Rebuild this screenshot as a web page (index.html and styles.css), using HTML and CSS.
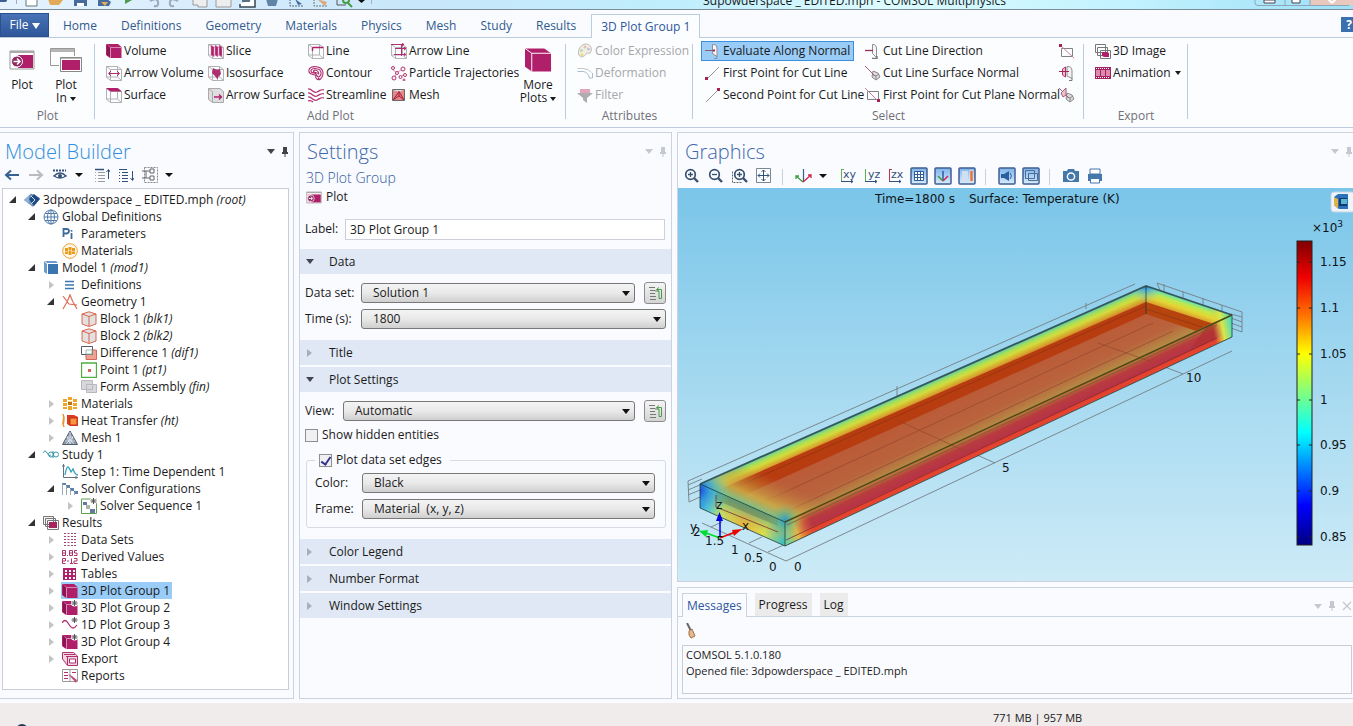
FILE: index.html
```html
<!DOCTYPE html>
<html lang="en">
<head>
<meta charset="utf-8">
<title>3dpowderspace _ EDITED.mph - COMSOL Multiphysics</title>
<link rel="stylesheet" href="styles.css">
</head>
<body>
<svg class="sprite" aria-hidden="true">
  <defs>
    <linearGradient id="jet" x1="0" y1="0" x2="0" y2="1">
      <stop offset="0" stop-color="#800000"/><stop offset=".12" stop-color="#f00000"/><stop offset=".25" stop-color="#ff7800"/>
      <stop offset=".37" stop-color="#ffff00"/><stop offset=".5" stop-color="#80ff80"/><stop offset=".63" stop-color="#00ffff"/>
      <stop offset=".75" stop-color="#0080ff"/><stop offset=".87" stop-color="#0000ff"/><stop offset="1" stop-color="#000080"/>
    </linearGradient>
  </defs>
  <symbol id="cube" viewBox="0 0 16 16"><path d="M0 1H12L15.500 4V15H4L0 12Z" fill="#b0206a"/><path d="M.5 1.500 4.500 4.500V15M4.500 4.500H15.500" fill="none" stroke="#d98ab2"/><path d="M1 1.500 4 4.500V14L1 12Z" fill="#861750"/></symbol>
  <symbol id="wire" viewBox="0 0 16 16"><path d="M.5 1.500H11.500L15.500 4.500V15.500H4.500L.5 12.500ZM4.500 15.500V4.500H15.500M4.500 4.500.5 1.500M11.500 1.500V12M.5 12H11.500L15.500 15.500" fill="none" stroke="#b2b2b6"/></symbol>
  <symbol id="arrow-volume" viewBox="0 0 16 16"><use href="#wire"/><path d="M3 8.500H13M5 6 2.500 8.500 5 11M11 6 13.500 8.500 11 11" fill="none" stroke="#b0306f"/></symbol>
  <symbol id="surface" viewBox="0 0 16 16"><use href="#wire"/><path d="M0 1H11.500L16 4.500H4.500Z" fill="#b0206a"/></symbol>
  <symbol id="slice" viewBox="0 0 16 16"><use href="#wire"/><path d="M3 2 6 4V14L3 12ZM7 2 10 4V14L7 12ZM11 2 14 4V14L11 12Z" fill="#b0206a" stroke="#d592b5" stroke-width=".5"/></symbol>
  <symbol id="iso" viewBox="0 0 16 16"><use href="#wire"/><path d="M5 3 9 5 12 4 13 9 10 12 10 15 7 11 4 8Z" fill="#b0306f"/></symbol>
  <symbol id="arrow-surface" viewBox="0 0 16 16"><path d="M.5 1.500H12L15.500 4.500V15.500H4.500L.5 12.500Z" fill="#dedde0" stroke="#aaa"/><path d="M.5 1.500 4.500 4.500V15" fill="none" stroke="#aaa"/><path d="M6 10H13M11 7.500 13.500 10 11 12.500" fill="none" stroke="#b0206a" stroke-width="1.300"/></symbol>
  <symbol id="line" viewBox="0 0 16 16"><use href="#wire"/><path d="M4.500 4.500H15.500M4.500 4.500V8" fill="none" stroke="#b0206a" stroke-width="1.400"/></symbol>
  <symbol id="contour" viewBox="0 0 16 16"><path d="M1 7C0 2 5 1 10 2S16 8 14 12 9 15 8 13 9 11 7 10 2 10 1 7ZM3 6C3 3 7 3.500 10 4S14 9 12 11 9 11 8 9 3 9 3 6ZM5.500 6C6 5 9 5 10 6.500S11 10 10 8.500 5 8 5.500 6ZM10 13 12 15" fill="none" stroke="#b0306f" stroke-width="1.100"/></symbol>
  <symbol id="stream" viewBox="0 0 16 16"><path d="M0 2C4 1 5 7 9 5S13 2 16 3M0 6C4 5 5 11 9 9S13 6 16 7M0 10C4 9 5 15 9 13S13 10 16 11M0 14C2 13 4 14 5 15" fill="none" stroke="#b0306f" stroke-width="1.200"/></symbol>
  <symbol id="arrow-line" viewBox="0 0 16 16"><use href="#wire"/><path d="M0 1.500H13M4 5.500H15M3 11.500H15M11 0 13 1.500 11 3M13 4 15 5.500 13 7M13 10 15 11.500 13 13M10.500 2V13" fill="none" stroke="#b0306f"/></symbol>
  <symbol id="particles" viewBox="0 0 16 16"><g fill="#fff" stroke="#b0306f"><circle cx="2" cy="3" r="1.500"/><circle cx="12" cy="4" r="2"/><circle cx="6" cy="8" r="1.500"/><circle cx="3" cy="13" r="2"/><circle cx="9.500" cy="12" r="1.500"/><circle cx="14" cy="10" r="1.500"/><circle cx="13" cy="15" r="1"/></g><path d="M2 5 5 7M7 7 10 5M4 11 5 9M11 11 12 10" stroke="#d88bb0"/></symbol>
  <symbol id="mesh-plot" viewBox="0 0 16 16"><path d="M1.500 2.500H13.500V13.500H1.500Z" fill="#e9858a" stroke="#696969"/><path d="M2 3H13L8 5Z" fill="#d5e2de"/><path d="M2 13 8 4.500 13 13 8 9ZM8 4.500V9" fill="#f06c78" stroke="#9b2740"/></symbol>
  <symbol id="palette" viewBox="0 0 16 16"><path d="M2 12C0 7 4 1 9 1S16 7 13 10C11 11 10 9 9 11S4 16 2 12Z" fill="#f2efdf" stroke="#bbb"/><circle cx="8" cy="4" r="1.500" fill="#e8b8cc"/><circle cx="4.500" cy="7.500" r="1.500" fill="#b9d9b9"/><circle cx="11.500" cy="6" r="1.500" fill="#b9c7e6"/><circle cx="5" cy="12" r="1.500" fill="#ead97f"/></symbol>
  <symbol id="deform" viewBox="0 0 16 16"><path d="M.5 3.500H6Q12 4 14.500 7.500" fill="none" stroke="#c5c5ca"/><path d="M.5 6.500H6Q11 7 12.500 13H15.500V8" fill="none" stroke="#a9bdd2"/></symbol>
  <symbol id="filter" viewBox="0 0 16 16"><path d="M3 2H13V6H3Z" fill="#e3a5bb"/><path d="M0 6H16L10 11V16L6 13V11Z" fill="#aeacae"/></symbol>
  <symbol id="eval" viewBox="0 0 16 16"><path d="M7.500 1.500Q12 1 12 6V13.500L7.500 10.500Z" fill="#fbf6f6" stroke="#8e8e92"/><path d="M12 13V15.500H9" fill="none" stroke="#8e8e92"/><path d="M0 7.500H8" stroke="#8b6070"/><path d="M8 6.500H10V8.500H8Z" fill="#a42354"/></symbol>
  <symbol id="direction" viewBox="0 0 16 16"><path d="M7.500 1.500Q11.500 1 11.500 6V14.500L7.500 10.500Z" fill="#fbf6f6" stroke="#8e8e92"/><path d="M12 13V15.500H7" fill="none" stroke="#77777b" stroke-width="1.400"/><path d="M0 7.500H8" stroke="#9b3355" stroke-width="1.300"/></symbol>
  <symbol id="first-pt" viewBox="0 0 16 16"><path d="M1 15 14 2" stroke="#98989b"/><path d="M0 12H3V15H0Z" fill="#a42354"/></symbol>
  <symbol id="second-pt" viewBox="0 0 16 16"><path d="M1 15 14 2" stroke="#98989b"/><path d="M12 1H15V4H12Z" fill="#a42354"/></symbol>
  <symbol id="normal" viewBox="0 0 16 16"><path d="M8 6 13 8 15 12 11 15 7 12Z" fill="#ddd" stroke="#88888b"/><path d="M8 10 11 11 14 9M11 11V15" fill="none" stroke="#88888b"/><path d="M0 1 10 11" stroke="#a95b7b"/></symbol>
  <symbol id="surf-normal" viewBox="0 0 16 16"><use href="#normal"/><path d="M2 6 7 1V8L4 10Z" fill="#edc2d0" stroke="#a25a78"/></symbol>
  <symbol id="plane-first" viewBox="0 0 16 16"><path d="M2.500 4.500H13.500V12.500H2.500Z" fill="none" stroke="#828286"/><path d="M0 1 12 13" stroke="#c8809b"/><path d="M12 12H15V15H12Z" fill="#a42354"/></symbol>
  <symbol id="plane-second" viewBox="0 0 16 16"><path d="M2.500 5.500H13.500V13.500H2.500Z" fill="none" stroke="#828286"/><path d="M1 2 15 15" stroke="#c8809b"/><path d="M0 1H3V4H0Z" fill="#a42354"/></symbol>
  <symbol id="plane-normal" viewBox="0 0 16 16"><path d="M8 1.500Q13 1 13 6V13.500L8 11Z" fill="#f4f0f2" stroke="#8e8e92"/><path d="M13 13V15.500H10" fill="none" stroke="#77777b"/><path d="M3.500 4 6.500 2V12L3.500 10Z" fill="#edc2d0" stroke="#b0306f"/><path d="M0 6.500H10" stroke="#a42354"/></symbol>
  <symbol id="image3d" viewBox="0 0 16 16"><path d="M.5 1.500H10.500V9.500H.5ZM2.500 4.500H12.500V12.500H2.500ZM5.500 7.500H15.500V15.500H5.500Z" fill="#fff" stroke="#777"/><path d="M7 9H12L14 10V14H9L7 13Z" fill="#b0206a"/></symbol>
  <symbol id="film" viewBox="0 0 16 16"><path d="M0 2H16V14H0Z" fill="#a32362"/><path d="M1 5H5V11H1ZM6 5H10V11H6ZM11 5H15V11H11Z" fill="#dd8aac"/><path d="M1 3.500H15M1 12.500H15" stroke="#fff" stroke-dasharray="1 1"/></symbol>
  <symbol id="plot" viewBox="0 0 26 20"><path d="M1 1H25V19H1Z" fill="#fff" stroke="#999"/><path d="M1 1H25V3H1Z" fill="#aaa"/><path d="M2 5H24V18H2Z" fill="#b0206a"/><path d="M2 5H9V18H2Z" fill="#fff"/><circle cx="8" cy="11.500" r="5.500" fill="#8f2a60" stroke="#fff" stroke-width="1"/><path d="M4.500 11.500H10M8 8.500 11 11.500 8 14.500" fill="none" stroke="#fff" stroke-width="1.500"/></symbol>
  <symbol id="plot-in" viewBox="0 0 34 26"><path d="M10 18.500H1.500V1.500H25.500V9" fill="#fff" stroke="#999"/><path d="M2 2H25V5H2Z" fill="#b5b5b5"/><path d="M11.500 10.500H32.500V24.500H11.500Z" fill="#fff" stroke="#888"/><path d="M12 11H32V12H12Z" fill="#bbb"/><path d="M13 13H31V23H13Z" fill="#b0206a"/></symbol>
  <symbol id="more" viewBox="0 0 28 26"><path d="M0 1H20L27 6V25H7L0 20Z" fill="#b0206a"/><path d="M0 1 7 6V25M7 6H27" fill="none" stroke="#fff"/></symbol>

  <symbol id="root" viewBox="0 0 16 16"><path d="M0 8 7 1.500 16 6 9 15Z" fill="#7394bd"/><path d="M0 8 5 3.500V12Z" fill="#8fb0d8"/><path d="M5 7 10 2 16 7 10 14Z" fill="#1f4a80"/><path d="M7 4 11 8 7 12" fill="none" stroke="#d5e2f1"/></symbol>
  <symbol id="globe" viewBox="0 0 16 16"><g fill="none" stroke="#527daa"><circle cx="8" cy="8" r="7"/><ellipse cx="8" cy="8" rx="3.500" ry="7"/><path d="M8 1V15M1 8H15M2 4.500H14M2 11.500H14"/></g></symbol>
  <symbol id="pi" viewBox="0 0 16 16"><path d="M1.500 11V3H4.500Q7 3 7 5T4.500 7.500H2M9.500 7V13" fill="none" stroke="#3e6a9d" stroke-width="1.800"/><path d="M8.700 4H10.400V5.600H8.700Z" fill="#3e6a9d"/></symbol>
  <symbol id="mats" viewBox="0 0 16 16"><path d="M1 3H5V6H1ZM6 1H10V4H6ZM11 3H15V6H11ZM1 7H5V10H1ZM6 5.500H10V9H6ZM11 7H15V10H11ZM1 11H5V13H1ZM6 10H10V14H6ZM11 11H15V13H11Z" fill="#eda62b"/><path d="M6 6H10V9H6Z" fill="#c3740c"/></symbol>
  <symbol id="mats-ring" viewBox="0 0 16 16"><circle cx="8" cy="8" r="7.300" fill="#fff8e9" stroke="#e8a33a"/><path d="M3 5H6V8H3ZM6.500 4H9.500V7.500H6.500ZM10 5H13V8H10ZM3 8.500H6V11H3ZM6.500 8H9.500V12H6.500ZM10 8.500H13V11H10Z" fill="#e89c1c"/></symbol>
  <symbol id="model" viewBox="0 0 16 16"><path d="M1 1 4 4V14L1 12ZM2 1H13L15 3H4Z" fill="#6b9bc9"/><path d="M5 4H15V14H5Z" fill="#3b75b0"/></symbol>
  <symbol id="defs" viewBox="0 0 16 16"><path d="M3 4.500H12M3 8H12M3 11.500H12" stroke="#3e76b3" stroke-width="1.600"/></symbol>
  <symbol id="geom" viewBox="0 0 16 16"><path d="M8 1 5 8 1 15M8 1 11 8 15 15M1 2 7 10 15 11M8 0V3" fill="none" stroke="#de6c58" stroke-width="1.200"/></symbol>
  <symbol id="block" viewBox="0 0 16 16"><path d="M1 3 8 .8 15 3V13L8 15.500 1 13Z" fill="#e3e0e0" stroke="#d86650"/><path d="M1 3 8 5.500 15 3M8 5.500V15" fill="none" stroke="#d86650"/></symbol>
  <symbol id="diff" viewBox="0 0 16 16"><path d="M5 5H15.500V14.500H5Z" fill="#efa292" stroke="#d7695a"/><path d="M.5 1.500H11.500V9.500H.5Z" fill="#fff" stroke="#555b66"/><path d="M5 5H11V9H5Z" fill="#fff" stroke="#9dbbb5"/></symbol>
  <symbol id="point" viewBox="0 0 16 16"><path d="M.5 1H15.500V15.500H.5Z" fill="#fff" stroke="#4fae40" stroke-width="1.300"/><path d="M7 7H10V10H7Z" fill="#d1685c"/></symbol>
  <symbol id="form" viewBox="0 0 16 16"><path d="M.5 1.500H11.500V10.500H.5ZM5.500 5.500H15.500V13.500H5.500Z" fill="#d8d8dc" stroke="#b8b8bd"/></symbol>
  <symbol id="heat" viewBox="0 0 16 16"><path d="M1 1Q3 4 2 8T2 14Q0 11 1 8T1 1" fill="#f0aa30" stroke="#e4932b"/><path d="M5 2H12L16 4V13H8L5 11Z" fill="#d83b20"/><path d="M8 5H15V12H8Z" fill="#f7943c" stroke="#c9321f"/></symbol>
  <symbol id="mesh" viewBox="0 0 16 16"><path d="M8 1 15.500 14.500H.5Z" fill="#8b9bac" stroke="#52606e"/><path d="M5 7H11L8 14ZM3 11H13M5 7 8 10 11 7M8 2V10M4 14 8 10 12 14" fill="none" stroke="#dfe5eb" stroke-width=".8"/></symbol>
  <symbol id="study" viewBox="0 0 16 16"><path d="M0 6Q2 2 4 6T8 8" fill="none" stroke="#3996ad"/><circle cx="8" cy="7.500" r="2.500" fill="none" stroke="#3996ad"/><circle cx="13" cy="7.500" r="2.500" fill="none" stroke="#3996ad"/><path d="M10 4V11" stroke="#3996ad"/></symbol>
  <symbol id="step" viewBox="0 0 16 16"><path d="M1.500 0V13.500H16M0 2H3M14 12V15" fill="none" stroke="#637281"/><path d="M3 11Q5 0 7 4T9 8 11 5Q13 11 16 11" fill="none" stroke="#2f9fc0" stroke-width="1.300"/></symbol>
  <symbol id="solver" viewBox="0 0 16 16"><path d="M0 2H4V4H0ZM4 4H8V7H4ZM8 7H12V10H8ZM12 10H16V13H12Z" fill="#5b83ad"/><path d="M.5 3V14M4.500 5V14M8.500 8V14M12.500 11V14" stroke="#9aa7b4"/></symbol>
  <symbol id="star" viewBox="0 0 16 16"><circle cx="12.500" cy="3" r="3.500" fill="#fff"/><path d="M12.500 0V6M9.500 3H15.500M10.500 1 14.500 5M14.500 1 10.500 5" stroke="#555"/></symbol>
  <symbol id="sequence" viewBox="0 0 16 16"><path d="M.5 1H15.500V15.500H.5Z" fill="#fff" stroke="#5f9e55"/><path d="M2 4H6V7H2ZM9 11H14V15H9Z" fill="#617c9b"/><path d="M5 7H9V11H5Z" fill="#a7b5a9"/><use href="#star"/></symbol>
  <symbol id="results" viewBox="0 0 16 16"><path d="M.5 1.500H10.500V9.500H.5ZM2.500 3.500H12.500V11.500H2.500ZM4.500 5.500H15.500V14.500H4.500Z" fill="#f6f6f6" stroke="#777"/><path d="M6 7H14V13H6Z" fill="#a8245d"/></symbol>
  <symbol id="datasets" viewBox="0 0 16 16"><path d="M3 1V15M6.500 1V15M10 1V15M13 1V15" stroke="#a24676" stroke-width="2" stroke-dasharray="1 2"/></symbol>
  <symbol id="derived" viewBox="0 0 16 16"><g fill="none" stroke="#b0306f"><path d="M.5 1.500H3.500V6.500H.5ZM.5 4H3.500M7.500 1.500H10.500V6.500H7.500ZM7.500 4H10.500M15 1.500H12.500V4H15V6.500H12M5.500 6V7M3.500 14.500H.5V9.500H3.500V12H.5M5 12H7M9.500 9.500V14.500M8 14.500H11M12 9.500H15V12H12V14.500H15.500"/></g></symbol>
  <symbol id="tables" viewBox="0 0 16 16"><path d="M1 2H14V14H1Z" fill="#b0206a"/><path d="M3 4H5V6H3ZM7 4H9V6H7ZM11 4H13V6H11ZM3 7H5V9H3ZM7 7H9V9H7ZM11 7H13V9H11ZM3 11H5V13H3ZM7 11H9V13H7ZM11 11H13V13H11Z" fill="#fff"/></symbol>
  <symbol id="cube-star" viewBox="0 0 16 16"><use href="#cube"/><use href="#star"/></symbol>
  <symbol id="plot1d" viewBox="0 0 16 16"><path d="M0 6Q3 1 6 6T11 11 15 8" fill="none" stroke="#b0306f" stroke-width="1.300"/><use href="#star"/></symbol>
  <symbol id="export" viewBox="0 0 16 16"><path d="M.5 1.500H11.500L15.500 5V14.500H5.500L.5 8Z" fill="#f3d5e2" stroke="#b0306f"/><path d="M2 3.500H13M4 5.500H15M5.500 6V14" fill="none" stroke="#b0306f"/><path d="M7.500 8H13.500V12H7.500Z" fill="#fff" stroke="#b0306f"/></symbol>
  <symbol id="reports" viewBox="0 0 16 16"><path d="M.5 1.500H15.500V13.500H.5ZM8 2V13" fill="#fff" stroke="#999"/><path d="M2 4.500H6M2 7.500H6M2 10.500H6M10 4.500H14" stroke="#b0306f"/><path d="M6 6 14 15 15 12 10 8Z" fill="#c54a85"/></symbol>

  <symbol id="pin" viewBox="0 0 8 12"><path d="M2 1H6V6H7V8H1V6H2ZM3.500 8H4.500V11H3.500Z" fill="currentColor"/></symbol>
  <symbol id="expand" viewBox="0 0 16 16"><path d="M1 2.500H10" stroke="#31517b" stroke-width="1.500"/><path d="M4 5.500H11M4 8.500H11M4 11.500H11M4 14.500H11" stroke="#999"/><path d="M1.500 5V15" stroke="#aaa" stroke-dasharray="1 2"/><path d="M14.500 12V3M12.500 5 14.500 2.500 16 5" fill="none" stroke="#31517b"/></symbol>
  <symbol id="collapse" viewBox="0 0 16 16"><path d="M1 2.500H9M4 5.500H10M4 8.500H10M4 11.500H10M4 14.500H10" stroke="#31517b"/><path d="M1.500 5V15" stroke="#31517b" stroke-dasharray="1 2"/><path d="M14.500 4V13M12.500 11 14.500 13.500 16 11" fill="none" stroke="#31517b"/></symbol>
  <symbol id="goto" viewBox="0 0 16 16"><path d="M2 2.500H8M3 5.500H8M3 8.500H8M3 11.500H9M3 14.500H9" stroke="#777"/><path d="M8 6H12V13.500H14.500V4.500H10M12 2.500 9.500 4.500 12 6.500" fill="none" stroke="#4d9a4d"/></symbol>
  <symbol id="lens" viewBox="0 0 16 16"><circle cx="6.500" cy="6.500" r="4.800" fill="none" stroke="#36506e" stroke-width="1.700"/><path d="M10 10 14 14" stroke="#36506e" stroke-width="2.400"/></symbol>
</svg>

<header class="titlebar">
  <div class="quick" aria-hidden="true">
    <svg viewBox="0 0 372 10" width="372" height="10">
      <path d="M0 0H8L6 3H0Z" fill="#395f93"/><path d="M16.500 0V5" stroke="#aab"/><path d="M26 0V7H37V0" fill="#fff" stroke="#677"/>
      <path d="M48 0 50 6H59L63 1H53Z" fill="#e2aa58"/><path d="M74 0V7H87V0Z" fill="#466c9b"/><path d="M77 4H84V7H77Z" fill="#fff"/>
      <path d="M98 0V7H109L111 3 107 0Z" fill="#466c9b"/><path d="M101 3H108L105 7Z" fill="#e4ad60"/>
      <path d="M125 0H134L125 5Z" fill="#4c9e4e"/><path d="M150 2Q157-2 158 3T154 7M178 2Q171-2 170 3T174 7" fill="none" stroke="#9ab" stroke-width="2"/>
      <path d="M193 0V6H198V8H207V0M216 0V8H231V0" fill="#eee" stroke="#999"/><path d="M240 5V8H255V0M242 2H250" fill="#fff" stroke="#345" stroke-width="1.500"/>
      <path d="M266 0 268 7H276L278 0Z" fill="#6084a8"/><path d="M290 0V7H303" fill="none" stroke="#567" stroke-dasharray="2 1"/><path d="M295 0 302 5 298 6Z" fill="#456c99"/>
      <path d="M314 0V7H327" fill="none" stroke="#777" stroke-dasharray="2 1"/><path d="M317 0 325 7 327 3Z" fill="#dca67e"/>
      <path d="M337 0V6H346" fill="none" stroke="#555"/><circle cx="346" cy="1" r="3" fill="none" stroke="#469b46" stroke-width="2"/><path d="M348 4 352 8" stroke="#469b46" stroke-width="2"/><path d="M358 1H365L361.500 4Z" fill="#111"/><path d="M371.500 0V5" stroke="#aab"/>
    </svg>
  </div>
  <span class="caption">3dpowderspace _ EDITED.mph - COMSOL Multiphysics</span>
  <svg class="winbtns" viewBox="0 0 99 10" width="99" height="10" aria-hidden="true"><path d="M56 0H99V6H56Z" fill="#e9c8bd"/><path d="M1 0V4Q1 6.500 4 6.500H95M31 0V6M56 0V6" fill="none" stroke="#8ea5b5"/><path d="M10 1H21V4H10ZM38 0V4H46V0" fill="#fff" stroke="#445"/><path d="M74 0 78 4M82 0 78 4" stroke="#fff" stroke-width="2"/></svg>
</header>

<nav class="tabs">
  <button class="file">File <i class="tri"></i></button>
  <button>Home</button><button>Definitions</button><button>Geometry</button><button>Materials</button><button>Physics</button><button>Mesh</button><button>Study</button><button>Results</button>
  <button class="active">3D Plot Group 1</button>
  <button class="help" aria-label="Help">?</button>
</nav>

<section class="ribbon">
  <div class="group g-plot">
    <div class="big-row">
      <button class="big"><svg class="i-plot"><use href="#plot"/></svg><span>Plot</span></button>
      <button class="big"><svg class="i-in"><use href="#plot-in"/></svg><span>Plot</span><span>In <i class="tri"></i></span></button>
    </div>
    <h3>Plot</h3>
  </div>
  <div class="group g-add">
    <div class="cols">
      <div class="col"><button><svg><use href="#cube"/></svg>Volume</button><button><svg><use href="#arrow-volume"/></svg>Arrow Volume</button><button><svg><use href="#surface"/></svg>Surface</button></div>
      <div class="col"><button><svg><use href="#slice"/></svg>Slice</button><button><svg><use href="#iso"/></svg>Isosurface</button><button><svg><use href="#arrow-surface"/></svg>Arrow Surface</button></div>
      <div class="col"><button><svg><use href="#line"/></svg>Line</button><button><svg><use href="#contour"/></svg>Contour</button><button><svg><use href="#stream"/></svg>Streamline</button></div>
      <div class="col"><button><svg><use href="#arrow-line"/></svg>Arrow Line</button><button><svg><use href="#particles"/></svg>Particle Trajectories</button><button><svg><use href="#mesh-plot"/></svg>Mesh</button></div>
      <button class="big"><svg class="i-more"><use href="#more"/></svg><span>More</span><span>Plots <i class="tri"></i></span></button>
    </div>
    <h3>Add Plot</h3>
  </div>
  <div class="group g-attr">
    <div class="cols">
      <div class="col"><button disabled><svg><use href="#palette"/></svg>Color Expression</button><button disabled><svg><use href="#deform"/></svg>Deformation</button><button disabled><svg><use href="#filter"/></svg>Filter</button></div>
    </div>
    <h3>Attributes</h3>
  </div>
  <div class="group g-select">
    <div class="cols">
      <div class="col"><button class="on"><svg><use href="#eval"/></svg>Evaluate Along Normal</button><button><svg><use href="#first-pt"/></svg>First Point for Cut Line</button><button><svg><use href="#second-pt"/></svg>Second Point for Cut Line</button></div>
      <div class="col"><button><svg><use href="#direction"/></svg>Cut Line Direction</button><button><svg><use href="#normal"/></svg>Cut Line Surface Normal</button><button><svg><use href="#plane-first"/></svg>First Point for Cut Plane Normal</button></div>
      <div class="col"><button aria-label="Second point for cut plane normal"><svg><use href="#plane-second"/></svg></button><button aria-label="Cut plane normal"><svg><use href="#plane-normal"/></svg></button><button aria-label="Cut plane surface normal"><svg><use href="#surf-normal"/></svg></button></div>
    </div>
    <h3>Select</h3>
  </div>
  <div class="group g-export">
    <div class="cols">
      <div class="col"><button><svg><use href="#image3d"/></svg>3D Image</button><button><svg><use href="#film"/></svg>Animation <i class="tri"></i></button></div>
    </div>
    <h3>Export</h3>
  </div>
</section>

<main class="desk">
  <section class="panel builder">
    <header class="head"><h2>Model Builder</h2><i class="tri"></i><svg class="pin"><use href="#pin"/></svg></header>
    <div class="bar">
      <svg viewBox="0 0 176 18" width="176" height="18" aria-hidden="true">
        <path d="M4 9H17M9 4.500 4 9 9 13.500" fill="none" stroke="#356293" stroke-width="2"/><path d="M27 9H40M35 4.500 40 9 35 13.500" fill="none" stroke="#bbb" stroke-width="2"/>
        <path d="M51 4.500H64" stroke="#35517b" stroke-width="2" stroke-dasharray="2 1"/><path d="M52 10Q58 4 64 10Q58 14 52 10Z" fill="#fff" stroke="#35517b" stroke-width="1.500"/><circle cx="58" cy="10" r="2" fill="#35517b"/>
        <path d="M73 7H81L77 11Z" fill="#111"/><use href="#expand" x="92" y="1" width="16" height="16"/><use href="#collapse" x="116" y="1" width="16" height="16"/>
        <path d="M142.500 1.500H155.500V16.500H142.500Z" fill="none" stroke="#888" stroke-dasharray="2 1"/><path d="M140 5H148M140 12H148M144 5V12M148 3H152V7H148ZM148 10H152V14H148Z" fill="none" stroke="#666"/><path d="M163 7H171L167 11Z" fill="#111"/>
      </svg>
    </div>
    <div class="treebox">
      <ul class="tree">
        <li><div class="row"><i class="open"></i><span class="node"><svg><use href="#root"/></svg>3dpowderspace _ EDITED.mph <em>(root)</em></span></div>
        <ul>
          <li><div class="row"><i class="open"></i><span class="node"><svg><use href="#globe"/></svg>Global Definitions</span></div>
            <ul>
              <li><div class="row"><i></i><span class="node"><svg><use href="#pi"/></svg>Parameters</span></div></li>
              <li><div class="row"><i></i><span class="node"><svg><use href="#mats-ring"/></svg>Materials</span></div></li>
            </ul></li>
          <li><div class="row"><i class="open"></i><span class="node"><svg><use href="#model"/></svg>Model 1 <em>(mod1)</em></span></div>
            <ul>
              <li><div class="row"><i class="shut"></i><span class="node"><svg><use href="#defs"/></svg>Definitions</span></div></li>
              <li><div class="row"><i class="open"></i><span class="node"><svg><use href="#geom"/></svg>Geometry 1</span></div>
                <ul>
                  <li><div class="row"><i></i><span class="node"><svg><use href="#block"/></svg>Block 1 <em>(blk1)</em></span></div></li>
                  <li><div class="row"><i></i><span class="node"><svg><use href="#block"/></svg>Block 2 <em>(blk2)</em></span></div></li>
                  <li><div class="row"><i></i><span class="node"><svg><use href="#diff"/></svg>Difference 1 <em>(dif1)</em></span></div></li>
                  <li><div class="row"><i></i><span class="node"><svg><use href="#point"/></svg>Point 1 <em>(pt1)</em></span></div></li>
                  <li><div class="row"><i></i><span class="node"><svg><use href="#form"/></svg>Form Assembly <em>(fin)</em></span></div></li>
                </ul></li>
              <li><div class="row"><i class="shut"></i><span class="node"><svg><use href="#mats"/></svg>Materials</span></div></li>
              <li><div class="row"><i class="shut"></i><span class="node"><svg><use href="#heat"/></svg>Heat Transfer <em>(ht)</em></span></div></li>
              <li><div class="row"><i class="shut"></i><span class="node"><svg><use href="#mesh"/></svg>Mesh 1</span></div></li>
            </ul></li>
          <li><div class="row"><i class="open"></i><span class="node"><svg><use href="#study"/></svg>Study 1</span></div>
            <ul>
              <li><div class="row"><i></i><span class="node"><svg><use href="#step"/></svg>Step 1: Time Dependent 1</span></div></li>
              <li><div class="row"><i class="open"></i><span class="node"><svg><use href="#solver"/></svg>Solver Configurations</span></div>
                <ul><li><div class="row"><i class="shut"></i><span class="node"><svg><use href="#sequence"/></svg>Solver Sequence 1</span></div></li></ul></li>
            </ul></li>
          <li><div class="row"><i class="open"></i><span class="node"><svg><use href="#results"/></svg>Results</span></div>
            <ul>
              <li><div class="row"><i class="shut"></i><span class="node"><svg><use href="#datasets"/></svg>Data Sets</span></div></li>
              <li><div class="row"><i class="shut"></i><span class="node"><svg><use href="#derived"/></svg>Derived Values</span></div></li>
              <li><div class="row"><i class="shut"></i><span class="node"><svg><use href="#tables"/></svg>Tables</span></div></li>
              <li><div class="row"><i class="shut"></i><span class="node sel"><svg><use href="#cube"/></svg>3D Plot Group 1</span></div></li>
              <li><div class="row"><i class="shut"></i><span class="node"><svg><use href="#cube-star"/></svg>3D Plot Group 2</span></div></li>
              <li><div class="row"><i class="shut"></i><span class="node"><svg><use href="#plot1d"/></svg>1D Plot Group 3</span></div></li>
              <li><div class="row"><i class="shut"></i><span class="node"><svg><use href="#cube-star"/></svg>3D Plot Group 4</span></div></li>
              <li><div class="row"><i class="shut"></i><span class="node"><svg><use href="#export"/></svg>Export</span></div></li>
              <li><div class="row"><i></i><span class="node"><svg><use href="#reports"/></svg>Reports</span></div></li>
            </ul></li>
        </ul></li>
      </ul>
    </div>
  </section>

  <section class="panel settings">
    <header class="head dim"><h2>Settings</h2><i class="tri"></i><svg class="pin"><use href="#pin"/></svg></header>
    <p class="sub">3D Plot Group</p>
    <button class="do-plot"><svg><use href="#plot"/></svg>Plot</button>
    <div class="field label-row"><label for="lbl">Label:</label><input id="lbl" type="text" value="3D Plot Group 1"></div>
    <h4 class="sec"><i class="down"></i>Data</h4>
    <div class="body">
      <div class="field f-wide"><label for="ds">Data set:</label><span class="sel-wrap"><select id="ds"><option>Solution 1</option></select></span><button class="go" aria-label="Go to source"><svg><use href="#goto"/></svg></button></div>
      <div class="field f-wide"><label for="tm">Time (s):</label><span class="sel-wrap"><select id="tm"><option>1800</option></select></span></div>
    </div>
    <h4 class="sec"><i class="right"></i>Title</h4>
    <h4 class="sec"><i class="down"></i>Plot Settings</h4>
    <div class="body">
      <div class="field f-view"><label for="vw">View:</label><span class="sel-wrap"><select id="vw"><option>Automatic</option></select></span><button class="go" aria-label="Go to source"><svg><use href="#goto"/></svg></button></div>
      <label class="check"><input type="checkbox">Show hidden entities</label>
      <fieldset>
        <legend><label class="check"><input type="checkbox" checked>Plot data set edges</label></legend>
        <div class="field"><label for="cl">Color:</label><span class="sel-wrap"><select id="cl"><option>Black</option></select></span></div>
        <div class="field"><label for="fr">Frame:</label><span class="sel-wrap"><select id="fr"><option>Material&nbsp; (x, y, z)</option></select></span></div>
      </fieldset>
    </div>
    <h4 class="sec"><i class="right"></i>Color Legend</h4>
    <h4 class="sec"><i class="right"></i>Number Format</h4>
    <h4 class="sec"><i class="right"></i>Window Settings</h4>
  </section>

  <div class="side">
    <section class="panel graphics">
      <header class="head dim"><h2>Graphics</h2><i class="tri"></i><svg class="pin"><use href="#pin"/></svg></header>
      <div class="bar gbar">
        <svg viewBox="684 165 424 20" width="424" height="20" role="img" aria-label="View tools">
          <defs><linearGradient id="tb" x1="0" y1="0" x2="0" y2="1"><stop offset="0" stop-color="#7fb3ec"/><stop offset="1" stop-color="#d8ecfd"/></linearGradient></defs>
          <use href="#lens" x="684" y="167" width="16" height="16"/><path d="M688 173.500H693M690.500 171V176" stroke="#36506e" stroke-width="1.300"/>
          <use href="#lens" x="708" y="167" width="16" height="16"/><path d="M712 173.500H717" stroke="#36506e" stroke-width="1.300"/>
          <path d="M732.500 170.500V181.500H742" fill="none" stroke="#666" stroke-dasharray="2 1"/><use href="#lens" x="733" y="167" width="16" height="16"/><path d="M737 173.500H742M739.500 171V176" stroke="#36506e" stroke-width="1.300"/>
          <path d="M756.500 167.500H770.500V181.500H756.500Z" fill="#fff" stroke="#7a8794"/><path d="M763.500 169V180M758 174.500H769M761.500 171 763.500 169 765.500 171M761.500 178 763.500 180 765.500 178M760 172.500 758 174.500 760 176.500M767 172.500 769 174.500 767 176.500" fill="none" stroke="#31517b"/>
          <path d="M782.500 168V184M985.500 168V184M1049.500 168V184" stroke="#c9d0da"/>
          <path d="M803.500 168V180" stroke="#31618b" stroke-width="1.200"/><path d="M803 181 796 175M796 178V175H799" fill="none" stroke="#3b9c3b" stroke-width="1.300"/><path d="M803 181 811 174M808 174H811V177" fill="none" stroke="#cf2449" stroke-width="1.300"/><path d="M819 173H827L823 177Z" fill="#111"/>
          <g fill="none"><path d="M841.500 168V180.500M865.500 168V180.500M841 168.500H844" stroke="#5fae52"/><path d="M889.500 168V180.500M889 168.500H892" stroke="#b03a58"/><path d="M841 180.500H853M865 180.500H877M889 180.500H901M851 179 853 180.500 851 182M875 179 877 180.500 875 182M899 179 901 180.500 899 182" stroke="#31517b"/></g>
          <text x="843" y="177" class="ax">xy</text><text x="868" y="177" class="ax">yz</text><text x="891" y="177" class="ax">zx</text>
          <g fill="url(#tb)" stroke="#3f5f91" stroke-width="1.500"><rect x="911" y="167" width="16" height="16" rx="1"/><rect x="935" y="167" width="16" height="16" rx="1"/><rect x="959" y="167" width="16" height="16" rx="1"/><rect x="999" y="167" width="16" height="16" rx="1"/><rect x="1023" y="167" width="16" height="16" rx="1"/></g>
          <path d="M914.500 170.500H923.500V179.500H914.500ZM917.500 170V180M920.500 170V180M914 173.500H924M914 176.500H924" fill="#fff" stroke="#315b93"/>
          <path d="M943 170V180" stroke="#1d4b8a" stroke-width="1.300"/><path d="M943 180 938 175" stroke="#3b9c3b" stroke-width="1.500"/><path d="M943 180 948 175" stroke="#cf2449" stroke-width="1.500"/>
          <path d="M962 170H968V181H962Z" fill="#cfe0f3"/><path d="M970 169.500H973V180.500H970Z" fill="#e86c34" stroke="#fff" stroke-width=".5"/>
          <path d="M1001 173H1004L1009 170V180L1004 177H1001Z" fill="#2c5f9d"/><path d="M1010 172Q1013 175 1010 178" fill="none" stroke="#2c5f9d"/>
          <path d="M1025.500 169.500H1034.500V177.500H1025.500ZM1028.500 172.500H1037.500V179.500H1028.500Z" fill="none" stroke="#4b6d96"/>
          <path d="M1063 170H1067L1068 168H1074L1075 170H1079V181H1063Z" fill="#4477aa"/><circle cx="1071" cy="175.500" r="3.600" fill="#4477aa" stroke="#fff" stroke-width="1.500"/>
          <path d="M1090 168H1100V173H1090Z" fill="#fff" stroke="#4477aa"/><path d="M1088 173H1102V180H1088Z" fill="#4477aa"/><path d="M1090.500 177.500H1099.500V182H1090.500Z" fill="#fff" stroke="#4477aa"/>
        </svg>
      </div>
      <svg class="canvas" viewBox="678 188 675 393" role="img" aria-label="Surface plot of temperature">
        <defs>
          <linearGradient id="sky" x1="0" y1="0" x2="0" y2="1"><stop offset="0" stop-color="#7ac5e9"/><stop offset=".5" stop-color="#a5d9f0"/><stop offset="1" stop-color="#cdebf7"/></linearGradient>
          <linearGradient id="wallL" gradientUnits="userSpaceOnUse" x1="980" y1="359.700" x2="986.200" y2="373.700"><stop offset="0" stop-color="#55c9b8"/><stop offset=".25" stop-color="#a5df5a"/><stop offset=".5" stop-color="#d3dc3c"/><stop offset=".8" stop-color="#d7a52e"/><stop offset="1" stop-color="#cf7b28"/></linearGradient>
          <linearGradient id="wallR" gradientUnits="userSpaceOnUse" x1="1190" y1="301" x2="1185" y2="316"><stop offset="0" stop-color="#5ee0b8"/><stop offset=".3" stop-color="#bfe94c"/><stop offset=".6" stop-color="#e4d534"/><stop offset="1" stop-color="#d9942c"/></linearGradient>
          <linearGradient id="floor" gradientUnits="userSpaceOnUse" x1="963" y1="396" x2="980" y2="432"><stop offset="0" stop-color="#bb5b38"/><stop offset=".65" stop-color="#b9633d"/><stop offset="1" stop-color="#b58a45"/></linearGradient>
          <linearGradient id="side" gradientUnits="userSpaceOnUse" x1="980" y1="431" x2="989" y2="450.300"><stop offset="0" stop-color="#b98244"/><stop offset=".35" stop-color="#b83d3d"/><stop offset=".72" stop-color="#b73248"/><stop offset=".78" stop-color="#e0402f"/><stop offset="1" stop-color="#e8452e"/></linearGradient>
          <linearGradient id="front" gradientUnits="userSpaceOnUse" x1="700" y1="495" x2="786" y2="534"><stop offset="0" stop-color="#2450e0"/><stop offset=".12" stop-color="#4cc5e2"/><stop offset=".28" stop-color="#c5df62"/><stop offset=".55" stop-color="#e8b43a"/><stop offset=".78" stop-color="#dade4c"/><stop offset="1" stop-color="#44bfc0"/></linearGradient>
          <linearGradient id="frontTop" gradientUnits="userSpaceOnUse" x1="744" y1="503" x2="736" y2="521"><stop offset="0" stop-color="#58b5a0"/><stop offset="1" stop-color="#b0b060" stop-opacity="0"/></linearGradient>
          <linearGradient id="near" gradientUnits="userSpaceOnUse" x1="742" y1="503" x2="757" y2="470"><stop offset="0" stop-color="#7bc08c"/><stop offset=".3" stop-color="#cfb648" stop-opacity=".8"/><stop offset="1" stop-color="#c27b3a" stop-opacity="0"/></linearGradient>
          <linearGradient id="nearSide" gradientUnits="userSpaceOnUse" x1="785" y1="534" x2="812" y2="522"><stop offset="0" stop-color="#72d19c"/><stop offset=".4" stop-color="#e4c446" stop-opacity=".9"/><stop offset="1" stop-color="#e5622f" stop-opacity="0"/></linearGradient>
          <linearGradient id="end" gradientUnits="userSpaceOnUse" x1="1213" y1="330" x2="1232" y2="326"><stop offset="0" stop-color="#e7c43a" stop-opacity="0"/><stop offset=".5" stop-color="#d9e748"/><stop offset="1" stop-color="#53dcb8"/></linearGradient>
          <radialGradient id="blueA" gradientUnits="userSpaceOnUse" cx="698" cy="490" r="32"><stop offset="0" stop-color="#1538e0"/><stop offset=".35" stop-color="#2c9ce8" stop-opacity=".8"/><stop offset="1" stop-color="#5fe0c0" stop-opacity="0"/></radialGradient>
          <radialGradient id="blueC" gradientUnits="userSpaceOnUse" cx="1146" cy="283" r="20"><stop offset="0" stop-color="#0b35e0"/><stop offset=".35" stop-color="#48a8df" stop-opacity=".9"/><stop offset="1" stop-color="#9fdca0" stop-opacity="0"/></radialGradient>
          <radialGradient id="blueB" gradientUnits="userSpaceOnUse" cx="785" cy="520" r="18"><stop offset="0" stop-color="#2097d2" stop-opacity=".9"/><stop offset=".5" stop-color="#5db48f" stop-opacity=".5"/><stop offset="1" stop-color="#aab060" stop-opacity="0"/></radialGradient>
          <clipPath id="body"><path d="M700 484 1146 286 1232 315V337L785 546 700 508Z"/></clipPath>
        </defs>
        <rect x="678" y="188" width="675" height="393" fill="url(#sky)"/>
        <g fill="none" stroke="#747e85" stroke-width=".9">
          <path d="M688 481 1135 284M688 481 689 502M688 485 702 479M688 490 702 484M688 495 700 490M689 502 700 497M897 386V407M1086 303V309"/>
          <path d="M1157 283 1242 312V332M1157 283 1160 290M1164 284V293M1183 291V300M1203 298V306M1222 305V312M1231 314 1242 317M1231 318 1242 322M1231 323 1242 327M1231 328 1242 332"/>
          <path d="M702 523 786 561 1232 351M768 552 786 544M749 543 762 537M730 535 743 529M711 527 722 522M995 463 977 455M1183 374 1165 367"/>
        </g>
        <g clip-path="url(#body)">
          <path d="M700 484 1146 286V306L716 500V508H700Z" fill="url(#wallL)"/>
          <path d="M700 506 1146 312 1232 314 785 524Z" fill="url(#floor)"/>
          <path d="M1146 286 1232 315V337L1217 338V325L1146 304Z" fill="url(#wallR)"/>
          <path d="M716 491 1146 302V314L716 508Z" fill="#b73c10"/>
          <path d="M716 496 1146 306" stroke="#9b350f"/>
          <path d="M1146 302 1217 325V338L1146 314Z" fill="#b6440f"/>
          <path d="M1146 309 1217 332" stroke="#953a12"/>
          <path d="M785 521 1232 314V337L785 546Z" fill="url(#side)"/>
          <path d="M1206 327 1217 322V338L1190 350Z" fill="#b03030" opacity=".7"/>
          <g stroke="#91442b" stroke-width=".8" fill="none" opacity=".8"><path d="M722 521 1153 323M745 531 1173 331M897 420 967 452M1098 343 1152 362"/></g>
          <path d="M700 484 785 522 880 478 790 440Z" fill="url(#near)"/>
          <path d="M785 522 840 496V520L785 546Z" fill="url(#nearSide)"/>
          <path d="M700 484 785 522V546L700 508Z" fill="url(#front)"/>
          <path d="M700 484 785 522V546L700 508Z" fill="url(#frontTop)"/>
          <path d="M716 492 778 519V526L716 500Z" fill="#5f7a50" opacity=".5"/>
          <path d="M1205 305 1232 315V337L1205 350Z" fill="url(#end)"/>
          <circle cx="698" cy="490" r="32" fill="url(#blueA)"/><circle cx="1146" cy="283" r="20" fill="url(#blueC)"/><circle cx="785" cy="520" r="18" fill="url(#blueB)"/>
        </g>
        <g fill="none" stroke="#1f3b35" stroke-width="1">
          <path d="M700 484 1146 286 1232 315" stroke="#35585a" stroke-width="1.800"/>
          <path d="M1232 315V337L785 546 700 508V484L785 522V546M1146 286V314" stroke-width=".8"/>
          <path d="M785 522 1232 315" stroke="#4b4a12" stroke-width="1.400"/>
          <path d="M787 525 1217 325" stroke="#786020" stroke-width=".8"/>
          <path d="M786 540 1217 338M716 495V507L778 532" stroke="#7e2c2c" stroke-width=".8"/>
        </g>
        <path d="M720 538V518" stroke="#0000e0" stroke-width="1.500"/><path d="M716 521 719.500 512 723 521Z" fill="#0000e0"/>
        <path d="M720 538 735 532" stroke="#f00000" stroke-width="1.500"/><path d="M732 530 742 529 734 536Z" fill="#f00000"/>
        <path d="M720 538 706 533" stroke="#00dc30" stroke-width="1.500"/><path d="M708 530 699 531 706 537Z" fill="#00dc30"/>
        <g class="num"><text x="716" y="509">z</text><text x="742" y="530">x</text><text x="690" y="531">y</text><text x="693" y="536">2</text><text x="705" y="545">1.5</text><text x="731" y="554">1</text><text x="744" y="562">0.5</text><text x="769" y="571">0</text><text x="794" y="571">0</text><text x="1002" y="472">5</text><text x="1186" y="382">10</text>
        <text x="875" y="203">Time=1800 s</text><text x="969" y="203">Surface: Temperature (K)</text>
        <text x="1312" y="232">×10<tspan dy="-5" class="sup">3</tspan></text>
        <text x="1320" y="266">1.15</text><text x="1320" y="312">1.1</text><text x="1320" y="358">1.05</text><text x="1320" y="404">1</text><text x="1320" y="449">0.95</text><text x="1320" y="495">0.9</text><text x="1320" y="541">0.85</text></g>
        <rect x="1297" y="241" width="15" height="304" fill="url(#jet)" stroke="#222"/>
        <path d="M1297 262H1300M1309 262H1312M1297 308H1300M1309 308H1312M1297 354H1300M1309 354H1312M1297 400H1300M1309 400H1312M1297 445H1300M1309 445H1312M1297 491H1300M1309 491H1312M1297 537H1300M1309 537H1312" stroke="#222"/>
        <rect x="1331" y="192" width="24" height="20" rx="3" fill="#eef4fb" stroke="#c3d3e2"/><path d="M1334 197 1338 194H1348V209H1339L1334 205Z" fill="#2b70b9"/><path d="M1334 197 1338 199V209L1334 205Z" fill="#e0b24a"/><path d="M1339 198H1347V206H1339Z" fill="#123a6b"/><path d="M1341 199H1347V204H1341Z" fill="#5bb7cf"/>
      </svg>
    </section>

    <section class="panel messages">
      <div class="mtabs">
        <button class="active">Messages</button><button>Progress</button><button>Log</button>
        <span class="mctl"><i class="tri"></i><svg class="pin"><use href="#pin"/></svg><svg class="x" viewBox="0 0 10 10"><path d="M1 1 9 9M9 1 1 9" stroke="currentColor" stroke-width="1.300"/></svg></span>
      </div>
      <button class="clear" aria-label="Clear"><svg viewBox="0 0 16 16"><path d="M3 0 7 8" stroke="#666" stroke-width="2"/><path d="M5 8 8 6 11 13 7 15 5 12Z" fill="#e6b98b" stroke="#9b7149"/></svg></button>
      <div class="log"><p>COMSOL 5.1.0.180</p><p>Opened file: 3dpowderspace _ EDITED.mph</p></div>
    </section>
  </div>
</main>
<footer class="status"><i class="orb"></i><span>771 MB | 957 MB</span></footer>
</body>
</html>
```

FILE: styles.css
```css
* { box-sizing: border-box; }
body { margin: 0; height: 100vh; overflow: hidden; display: flex; flex-direction: column; background: #f9fbff; color: #1a1a1a; font: 12px/16px "Open Sans", "Noto Sans", sans-serif; }
button, input, select { font: inherit; color: inherit; }
button { margin: 0; padding: 0; border: 0; background: none; white-space: nowrap; }
h2, h3, h4, p, ul { margin: 0; padding: 0; font-size: 12px; font-weight: 400; list-style: none; }
svg { flex: none; display: block; }
.sprite { position: absolute; width: 0; height: 0; }
.tri { display: inline-block; flex: none; border: 3px solid transparent; border-top: 4px solid currentColor; border-bottom: 0; vertical-align: middle; }

.titlebar { flex: none; height: 10px; display: flex; align-items: flex-end; overflow: hidden; border-bottom: 1px solid #7d8c99; background: linear-gradient(90deg, #e6f3ff, #c9e7fa 30%, #bfeefc 50%, #dcfbff 65%, #c4f3ff 82%, #9fe0f7); }
.quick { width: 703px; }
.caption { flex: 1; line-height: 16px; white-space: nowrap; }

.tabs { flex: none; height: 28px; display: flex; align-items: flex-end; border-bottom: 1px solid #bccbdd; color: #2f5a8c; }
.tabs button { height: 22px; padding: 0 12px; }
.tabs .file { width: 49px; height: 24px; margin-right: 2px; padding: 0; color: #fff; background: linear-gradient(#4773b6, #2f569a); border: 1px solid #2c5089; }
.tabs .file .tri { border-width: 6px 4px 0; }
.tabs .active { height: 24px; margin-left: 3px; margin-bottom: -1px; padding: 0 9px; border: 1px solid #bccbdd; border-bottom: 0; background: #fcfdff; color: #2d569c; }
.tabs .help { width: 12px; height: 15px; margin: 0 0 5px auto; padding: 0 0 0 4px; background: #3a6fb0; color: #fff; font-weight: 700; line-height: 14px; }

.ribbon { flex: none; height: 90px; display: flex; padding: 2px 0 0; background: #fcfdff; border-bottom: 1px solid #bccbdd; }
.group { display: flex; flex-direction: column; justify-content: space-between; height: 84px; position: relative; }
.group::after { content: ""; position: absolute; right: 0; top: 4px; bottom: 5px; width: 1px; background: #bccbdd; }
.group h3 { text-align: center; color: #707078; line-height: 16px; }
.g-plot { width: 95px; }
.g-add { width: 471px; }
.g-attr { width: 127px; }
.g-select { width: 391px; }
.g-export { width: 104px; }
.cols { display: grid; padding-left: 11px; }
.g-add .cols { grid-template-columns: 102px 100px 83px 122px 50px; }
.g-select .cols { grid-template-columns: 161px 194px 20px; padding-left: 8px; }
.col { display: flex; flex-direction: column; align-items: flex-start; }
.col button { display: flex; align-items: center; gap: 2px; height: 22px; }
.col svg { width: 16px; height: 16px; }
.col .tri { margin-left: 2px; }
.col button:disabled { color: #a6a6aa; }
.g-select .col button { padding: 0 4px; }
.g-select .col .on { height: 20px; margin: 1px 0; padding: 0 3px; border: 1px solid #3b8fdc; background: #99ccf7; }
.g-select .col + .col button { padding: 0 3px; }
.big-row { display: flex; }
.big { width: 44px; height: 68px; display: flex; flex-direction: column; align-items: center; line-height: 13px; }
.big svg { height: 26px; margin: 7px 0 5px; }
.i-plot { width: 26px; }
.i-in { width: 34px; }
.i-more { width: 27px; }
.g-add .big { width: 50px; }

.desk { flex: 1; min-height: 0; display: grid; grid-template-columns: 294px 373px minmax(0, 1fr); column-gap: 5px; padding: 4px 0 4px; }
.panel { border: 1px solid #cbd2e0; background: #fafbff; }
.builder { display: flex; flex-direction: column; border-left: 0; padding: 0 4px 8px 2px; }
.head { height: 33px; flex: none; display: flex; align-items: center; padding: 4px 0 0 3px; color: #444; }
.head h2 { flex: 1; font: 300 20px/28px "Open Sans", "Noto Sans", sans-serif; color: #2f8fdc; }
.head .tri { border-width: 5px 4px 0; margin-right: 6px; }
.pin { width: 8px; height: 12px; }
.dim { color: #c5c8d0; }
.dim h2 { color: #4169aa; }
.bar { height: 22px; display: flex; align-items: flex-start; }
.treebox { flex: 1; min-height: 0; border: 1px solid #c9cdd8; background: #fff; padding: 2px 0 0 6px; overflow: hidden; }
.tree ul { padding-left: 19px; }
.row { display: flex; align-items: center; height: 17px; }
.row > i { width: 14px; flex: none; }
.row > i::before { content: ""; display: block; width: 0; height: 0; }
.row .open::before { border: solid transparent; border-width: 0 0 7px 7px; border-bottom-color: #333; }
.row .shut::before { margin-left: 2px; border: solid transparent; border-width: 4px 0 4px 5px; border-left-color: #c4c4c4; }
.node { display: flex; align-items: center; height: 17px; padding: 0 2px 0 1px; white-space: pre; }
.node svg { width: 16px; height: 16px; margin-right: 3px; }
.sel { background: #99ccf7; }

.settings { padding: 0; }
.settings .head { padding: 4px 4px 0 7px; }
.sub { padding: 2px 0 0 6px; font: 300 14px/20px "Open Sans", "Noto Sans", sans-serif; color: #2f5aa0; }
.do-plot { display: flex; align-items: center; gap: 4px; height: 18px; padding-left: 6px; }
.do-plot svg { width: 16px; height: 13px; }
.field { display: flex; align-items: center; height: 20px; }
.label-row { margin: 13px 6px 10px 5px; }
.label-row label { width: 40px; }
.label-row input { flex: 1; min-width: 0; height: 21px; padding: 0 4px; border: 1px solid #cdd0da; background: #fff; }
.sec { display: flex; align-items: center; height: 25px; margin-bottom: 2px; background: #dfe8f4; line-height: 25px; }
.sec i { width: 29px; flex: none; }
.sec i::before { content: ""; display: block; width: 0; margin-left: 6px; border: solid transparent; }
.sec .down::before { border-width: 5px 4px 0; border-top-color: #445; }
.sec .right::before { margin-left: 7px; border-width: 4px 0 4px 5px; border-left-color: #a9afba; }
.body { padding: 7px 5px 11px; display: flex; flex-direction: column; gap: 6px; }
.f-wide label { width: 56px; }
.f-view label { width: 38px; }
.sel-wrap { position: relative; flex: 1; min-width: 0; display: flex; }
.sel-wrap::after { content: ""; position: absolute; right: 5px; top: 8px; border: 4px solid transparent; border-top: 5px solid #111; border-bottom: 0; pointer-events: none; }
select { appearance: none; flex: 1; min-width: 0; height: 20px; padding: 0 0 0 11px; border: 1px solid #787878; border-radius: 3px; background: linear-gradient(#f4f4f4, #e9e9e9 50%, #cfcfcf); }
.go { width: 22px; height: 22px; margin-left: 9px; flex: none; display: grid; place-items: center; border: 1px solid #8c8c8c; border-radius: 3px; background: linear-gradient(#f4f4f4, #d4d4d4); }
.go svg { width: 16px; height: 16px; }
.check { display: flex; align-items: center; gap: 4px; height: 16px; }
.check input { appearance: none; width: 13px; height: 13px; margin: 0; display: grid; place-items: center; border: 1px solid #8e8f8f; background: #f0f0f2; }
.check input:checked::before { content: ""; width: 4px; height: 8px; border: solid #33338e; border-width: 0 2px 2px 0; rotate: 35deg; }
fieldset { margin: 3px 0 0 1px; min-width: 0; padding: 5px 10px 8px 8px; border: 1px solid #d5dae3; border-radius: 3px; }
legend { padding: 0 8px 0 4px; }
fieldset .field + .field { margin-top: 6px; }
fieldset .field label { width: 47px; }

.side { min-width: 0; min-height: 0; display: flex; flex-direction: column; gap: 5px; }
.graphics { flex: 1; min-height: 0; display: flex; flex-direction: column; border-right: 0; }
.graphics .head { padding: 4px 0 0 7px; }
.gbar { padding-left: 6px; }
.canvas { flex: 1; min-height: 0; width: 100%; background: linear-gradient(#7ac5e9, #a5d9f0, #cdebf7); }
.ax { font: 11px "DejaVu Sans", sans-serif; fill: #31517b; }
.num { font: 12px "DejaVu Sans", sans-serif; fill: #101418; }
.sup { font-size: 9px; }

.messages { flex: none; height: 112px; display: flex; flex-direction: column; padding: 5px 1px 4px 4px; border-right: 0; }
.mtabs { height: 24px; flex: none; display: flex; align-items: flex-end; gap: 8px; margin-left: -4px; padding-left: 4px; border-bottom: 1px solid #cbd2e0; }
.mtabs button { height: 23px; padding: 0 4px; background: #ebebeb; }
.mtabs .active { height: 24px; margin-bottom: -1px; border: 1px solid #cbd2e0; border-bottom: 0; background: #fafbff; color: #2d569c; }
.mctl { margin-left: auto; display: flex; align-items: center; gap: 6px; height: 20px; color: #c5c8d0; }
.mctl .tri { border-width: 5px 4px 0; }
.mctl .x { width: 10px; height: 10px; }
.clear { width: 20px; height: 28px; flex: none; display: flex; align-items: center; padding-left: 2px; }
.clear svg { width: 16px; height: 16px; }
.log { flex: 1; border: 1px solid #c9cdd8; padding: 1px 3px; }
.log p { font-size: 11px; line-height: 16px; }
.status { flex: none; height: 23px; display: flex; align-items: center; padding-top: 7px; overflow: hidden; background: #f0ecec; font-size: 11px; }
.orb { align-self: flex-start; width: 12px; height: 12px; margin: 14px 0 0 16px; border-radius: 50%; background: #1d3a55; }
.status span { margin-left: 965px; }
```
